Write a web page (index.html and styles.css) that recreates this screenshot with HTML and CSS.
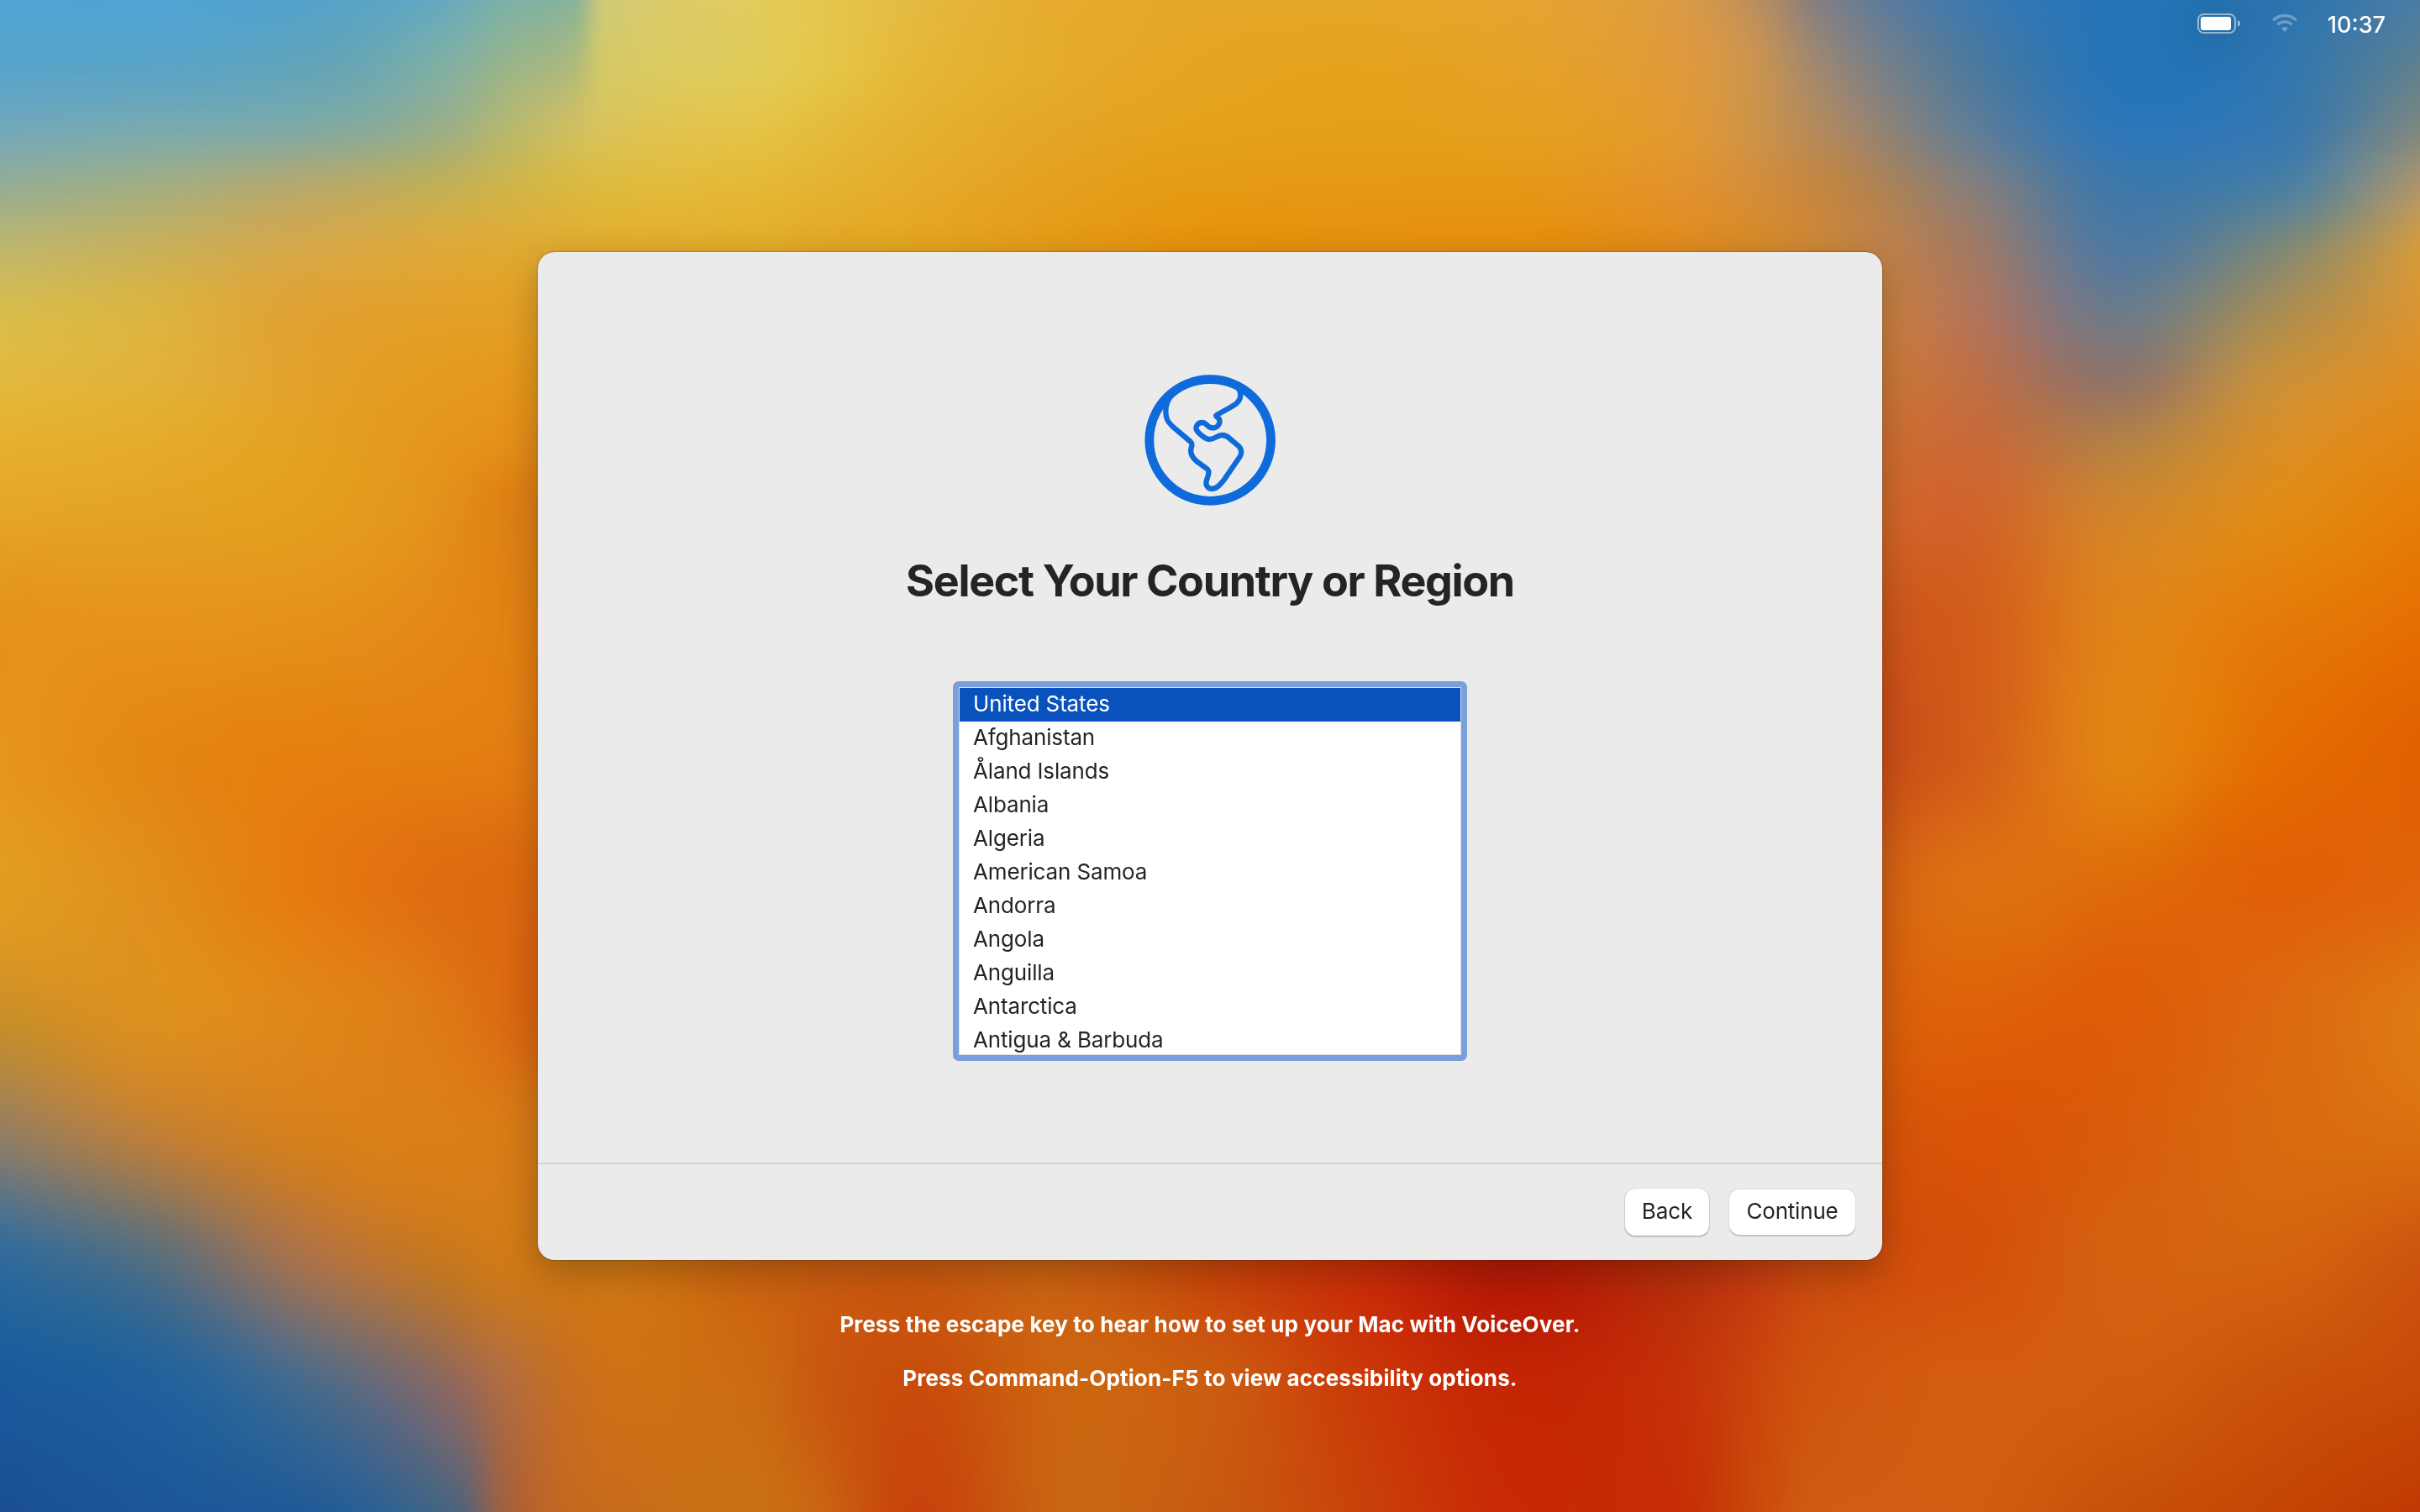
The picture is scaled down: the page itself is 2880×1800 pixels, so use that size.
FILE: index.html
```html
<!DOCTYPE html>
<html lang="en">
<head>
<meta charset="utf-8">
<title>Setup Assistant</title>
<link rel="stylesheet" href="styles.css">
</head>
<body>
<canvas class="wallpaper" id="wallpaper" width="1440" height="900"></canvas>
<div class="screen">
  <header class="menubar">
    <svg class="battery" viewBox="0 0 52 24" width="52" height="24">
      <rect x="1" y="1" width="44" height="22" rx="6.5" fill="none" stroke="#fff" stroke-opacity=".5" stroke-width="2"/>
      <rect x="4" y="4" width="36" height="16" rx="3" fill="#fff"/>
      <path d="M48 8c1.800.7 3 2.200 3 4s-1.200 3.300-3 4z" fill="#fff" fill-opacity=".55"/>
    </svg>
    <svg class="wifi" viewBox="0 0 30 22" width="30" height="22">
      <g fill="none" stroke="#fff" stroke-opacity=".3" stroke-width="3.400">
        <path d="M1.200 8.200a19.600 19.600 0 0 1 27.600 0"/>
        <path d="M6.300 13.400a12.400 12.400 0 0 1 17.400 0"/>
      </g>
      <path d="M15 22l-4.200-4.300a6 6 0 0 1 8.400 0z" fill="#fff" fill-opacity=".3"/>
    </svg>
    <span class="clock">10:37</span>
  </header>
  <main class="card">
    <section class="content">
      <svg class="globe" viewBox="0 0 600 570" width="200" height="190" fill="none" stroke="#0f6adc">
        <circle cx="300.500" cy="282" r="217" stroke-width="32.500"/>
        <path stroke-width="19" stroke-linejoin="round" d="M396 92C413 108 413 134 396 149C390 155 384 158 378 162L324 192Q320 194 323 197C333 204 336 212 334 220C330 237 310 243 296 234C287 227 283 219 272 219C256 219 247 234 252 246C254 251 260 256 264 260C276 270 284 279 298 279C316 279 326 264 343 264C355 264 363 269 370 276L400 301C413 312 415 328 406 342L352 421C340 437 325 456 307 456C290 456 282 440 289 422C294 409 296 400 295 393C293 385 286 382 280 378L252 357C234 342 228 328 233 309C236 302 238 296 231 288L172 238C148 217 142 205 142 180C142 140 166 112 196 96"/>
      </svg>
      <h1 class="title">Select Your Country or Region</h1>
      <ul class="regions">
        <li class="region selected">United States</li>
        <li class="region">Afghanistan</li>
        <li class="region">Åland Islands</li>
        <li class="region">Albania</li>
        <li class="region">Algeria</li>
        <li class="region">American Samoa</li>
        <li class="region">Andorra</li>
        <li class="region">Angola</li>
        <li class="region">Anguilla</li>
        <li class="region">Antarctica</li>
        <li class="region">Antigua &amp; Barbuda</li>
      </ul>
    </section>
    <footer class="actions">
      <button class="button back">Back</button>
      <button class="button continue">Continue</button>
    </footer>
  </main>
  <div class="hints">
    <p class="hint">Press the escape key to hear how to set up your Mac with VoiceOver.</p>
    <p class="hint second">Press Command-Option-F5 to view accessibility options.</p>
  </div>
</div>
<script src="wallpaper.js"></script>
</body>
</html>
```
FILE: styles.css
```css
* { box-sizing: border-box; }
body {
  margin: 0;
  width: 2880px;
  height: 1800px;
  overflow: hidden;
  background: #d8700f;
  font-family: Inter, "Liberation Sans", sans-serif;
  color: #242424;
}
.wallpaper {
  position: absolute;
  left: 0;
  top: 0;
  width: 2880px;
  height: 1800px;
}
.screen {
  position: relative;
  width: 2880px;
  height: 1800px;
  display: flex;
  flex-direction: column;
  align-items: center;
}
.menubar {
  width: 100%;
  height: 300px;
  padding: 16px 41px 0 0;
  display: flex;
  justify-content: flex-end;
  align-items: flex-start;
  color: #fff;
}
.battery { filter: drop-shadow(0 4px 26px rgba(0, 0, 0, .35)); margin-right: 37px; }
.wifi { margin-right: 36px; }
.clock {
  font-size: 27px;
  font-weight: 500;
  line-height: 27px;
}
.card {
  width: 1600px;
  height: 1200px;
  border-radius: 20px;
  background: #ebebeb;
  box-shadow: 0 0 2px rgba(0, 0, 0, .6), 0 14px 44px rgba(0, 0, 0, .25);
  display: flex;
  flex-direction: column;
}
.content {
  flex: 1;
  padding-top: 130px;
  display: flex;
  flex-direction: column;
  align-items: center;
}
.title {
  margin: 42px 0 89px;
  font-size: 52px;
  font-weight: 700;
  line-height: 60px;
  letter-spacing: -1.350px;
  white-space: nowrap;
}
.regions {
  list-style: none;
  margin: 0;
  width: 612px;
  height: 452px;
  border: 7px solid #7a9fdd;
  border-radius: 7px;
  background: #fff;
  box-shadow: inset 0 0 0 1px #dcdfe5;
  padding: 1px;
  overflow: hidden;
}
.region {
  height: 40px;
  padding-left: 16px;
  font-size: 26px;
  line-height: 37px;
  letter-spacing: -.150px;
}
.selected { background: #0952be; color: #fff; }
.actions {
  height: 116px;
  border-top: 2px solid #d5d5d5;
  padding: 29px 32px 0 0;
  display: flex;
  justify-content: flex-end;
  gap: 24px;
}
.button {
  border: 0;
  padding: 0 0 2px;
  border-radius: 12px;
  background: #fff;
  color: #242424;
  font-family: inherit;
  font-size: 26px;
  line-height: 52px;
}
.back {
  width: 100px;
  height: 56px;
  box-shadow: 0 0 1px rgba(0, 0, 0, .35), 0 1px 2px rgba(0, 0, 0, .35);
}
.continue {
  width: 150px;
  height: 54px;
  margin-top: 1px;
  letter-spacing: -.200px;
  box-shadow: 0 0 2px rgba(0, 0, 0, .2), 0 2px 1px rgba(0, 0, 0, .15);
}
.hints { padding-top: 59px; text-align: center; color: #fff; }
.hint {
  margin: 0;
  font-size: 26px;
  font-weight: 700;
  line-height: 36px;
  letter-spacing: .140px;
  white-space: nowrap;
}
.second { margin-top: 28px; }
```
FILE: wallpaper.js
```javascript
// Paints the wallpaper as a smooth colour mesh; "-" marks spots behind the card.
const xs = [0, 180, 360, 540, 600, 680, 720, 900, 960, 1080, 1260, 1440, 1620, 1800, 1980, 2100, 2160, 2340, 2520, 2700, 2880];
const ys = [0, 75, 150, 225, 300, 375, 450, 525, 600, 750, 900, 1050, 1200, 1350, 1500, 1650, 1800];
const mesh = [
  "4fa4d4 50a3d3 54a2cb 6aabbb 7cb1a8 88b49a cfca78 e3cb5c e4c750 e4bb42 e6ab2e e5a728 e5a728 e5a430 dd9c42 b38c64 877f80 3f79ae 2574b8 2b74b0 4a7da6",
  "58a4cb 5aa4c8 62a4ba 84b0a0 98b48c aeba7c d4c968 e1cb58 e4c84c e5b93a e5ab2a e5a522 e5a31e e5a228 e19b3a c49254 a08870 4f7a9c 2574b8 2f76b0 5f8090",
  "72a8bb 78a9b0 7fa9a5 9fb084 b5b770 cfbf62 d9c35a e4c347 e4be40 e5b232 e4a626 e5a21c e5a01a e5a020 e39a30 c8924c b48a5c 637d94 2d76b8 3577b0 7d8880",
  "98ae92 a6ae80 baa96a c6b052 d0b34a dab840 deba3e e4b836 e4b432 e5ab2a e5a01e e59a14 e59814 e59716 e2922a d28c3a c68640 897f78 3f78a8 4a7fa2 b2966a",
  "c0b76c cab058 d6a747 dfa836 e0a932 e2ab30 e3ac2e e4ac2a e4a826 e4a520 e59a18 e6920e e69010 e68f10 e28c1c d68a2c ce8838 a47a62 5279a0 7e8778 d59b3c",
  "d9bd4c dcb440 e1a232 e3a028 e4a026 e4a024 - - - - - - - - - - d08834 b57558 6f7a88 a88c54 dc9430",
  "e2ba3e e1b13a e3a22c e49a1e e5981c e5961a - - - - - - - - - - d08032 c07045 907468 c8903c e08e20",
  "e6b030 e5ab2a e4a222 e4941a e49019 e28a18 - - - - - - - - - - d0762e c96a38 b48046 d88e28 e48714",
  "e5a728 e4a424 e49f1e e28e1a df8214 de7e14 - - - - - - - - - - d2702a d0642c cf842e e08c18 e47f08",
  "e4921c e6921a e4901a e48616 e38214 e17c12 - - - - - - - - - - cc5418 d25c1a e08318 e47a08 e56e02",
  "e5951c e48714 e58010 e37e12 e37c12 e27a12 - - - - - - - - - - c84c18 d35c18 e28412 e46e02 e06002",
  "e29d20 e08e1c e57a10 df6c10 dd6a10 df6a10 - - - - - - - - - - d05614 de7012 df6c0a e06006 e0640a",
  "cc9028 dd901e e0861a dd7614 dc6a12 db6210 - - - - - - - - - - d45e10 de6208 dd5c08 dd6810 dd7a12",
  "917e64 bf7f38 d5801c da7e16 d87c16 d47a16 - - - - - - - - - - d0540c da5408 d85c0c d96a10 da7010",
  "2e6a9c 556e80 a8724c c8781e d07a18 d07816 d07814 cc6410 cc6010 cc5c10 cc6212 cb480a cb3008 b81c06 b82e0a c84010 cc4c0e d4500a d46010 d4620f cd540e",
  "1a5a9c 20609c 456a8c 90685c b06c40 c86e20 cf7018 cb6a12 c95c10 c84c0c cb6410 cb5c10 ca3a08 c42604 c42f08 cb480c cf540e d45c10 d25c0e cb520a c64a08",
  "1a4f90 1c5698 205a98 4a6480 a26040 c46820 c66a1c c97014 ca6812 c8440c c86412 c85a10 c9420a c82a04 c62c04 cb4c0c d05c12 d25c10 c85008 c44604 c03a04"
].map(line => {
  const row = line.split(" ").map(h => h === "-" ? null : [0, 2, 4].map(i => parseInt(h.slice(i, i + 2), 16)));
  for (let i = 0; i < row.length; i++) {
    if (row[i]) continue;
    let a = i - 1, b = i;
    while (!row[b]) b++;
    const t = (xs[i] - xs[a]) / (xs[b] - xs[a]);
    row[i] = row[a].map((v, c) => v + (row[b][c] - v) * t);
  }
  return row;
});

// Cubic interpolation through the points (p, v), with limited slopes to avoid ringing.
function slopes(p, v) {
  const n = p.length, d = [], m = [];
  for (let i = 0; i < n - 1; i++) d.push((v[i + 1] - v[i]) / (p[i + 1] - p[i]));
  for (let i = 0; i < n; i++) {
    if (i === 0) m.push(d[0]);
    else if (i === n - 1) m.push(d[n - 2]);
    else {
      const h0 = p[i] - p[i - 1], h1 = p[i + 1] - p[i];
      const mean = (d[i - 1] * h1 + d[i] * h0) / (h0 + h1);
      const limit = 2 * Math.min(Math.abs(d[i - 1]), Math.abs(d[i]));
      m.push(Math.max(-limit, Math.min(limit, mean)));
    }
  }
  return m;
}
function sample(p, v, count, scale) {
  const m = slopes(p, v), out = new Float32Array(count);
  let k = 0;
  for (let i = 0; i < count; i++) {
    const x = i * scale;
    while (k < p.length - 2 && x > p[k + 1]) k++;
    const h = p[k + 1] - p[k], t = (x - p[k]) / h, t2 = t * t, t3 = t2 * t;
    out[i] = (2 * t3 - 3 * t2 + 1) * v[k] + (t3 - 2 * t2 + t) * h * m[k] + (3 * t2 - 2 * t3) * v[k + 1] + (t3 - t2) * h * m[k + 1];
  }
  return out;
}

const canvas = document.getElementById("wallpaper");
const ctx = canvas.getContext("2d");
const W = canvas.width, H = canvas.height;
const image = ctx.createImageData(W, H);
for (let c = 0; c < 3; c++) {
  const lines = mesh.map(row => sample(xs, row.map(v => v[c]), W, 2));
  for (let x = 0; x < W; x++) {
    const column = sample(ys, lines.map(l => l[x]), H, 2);
    for (let y = 0; y < H; y++) image.data[(y * W + x) * 4 + c] = column[y];
  }
}
for (let i = 3; i < image.data.length; i += 4) image.data[i] = 255;
ctx.putImageData(image, 0, 0);
```
